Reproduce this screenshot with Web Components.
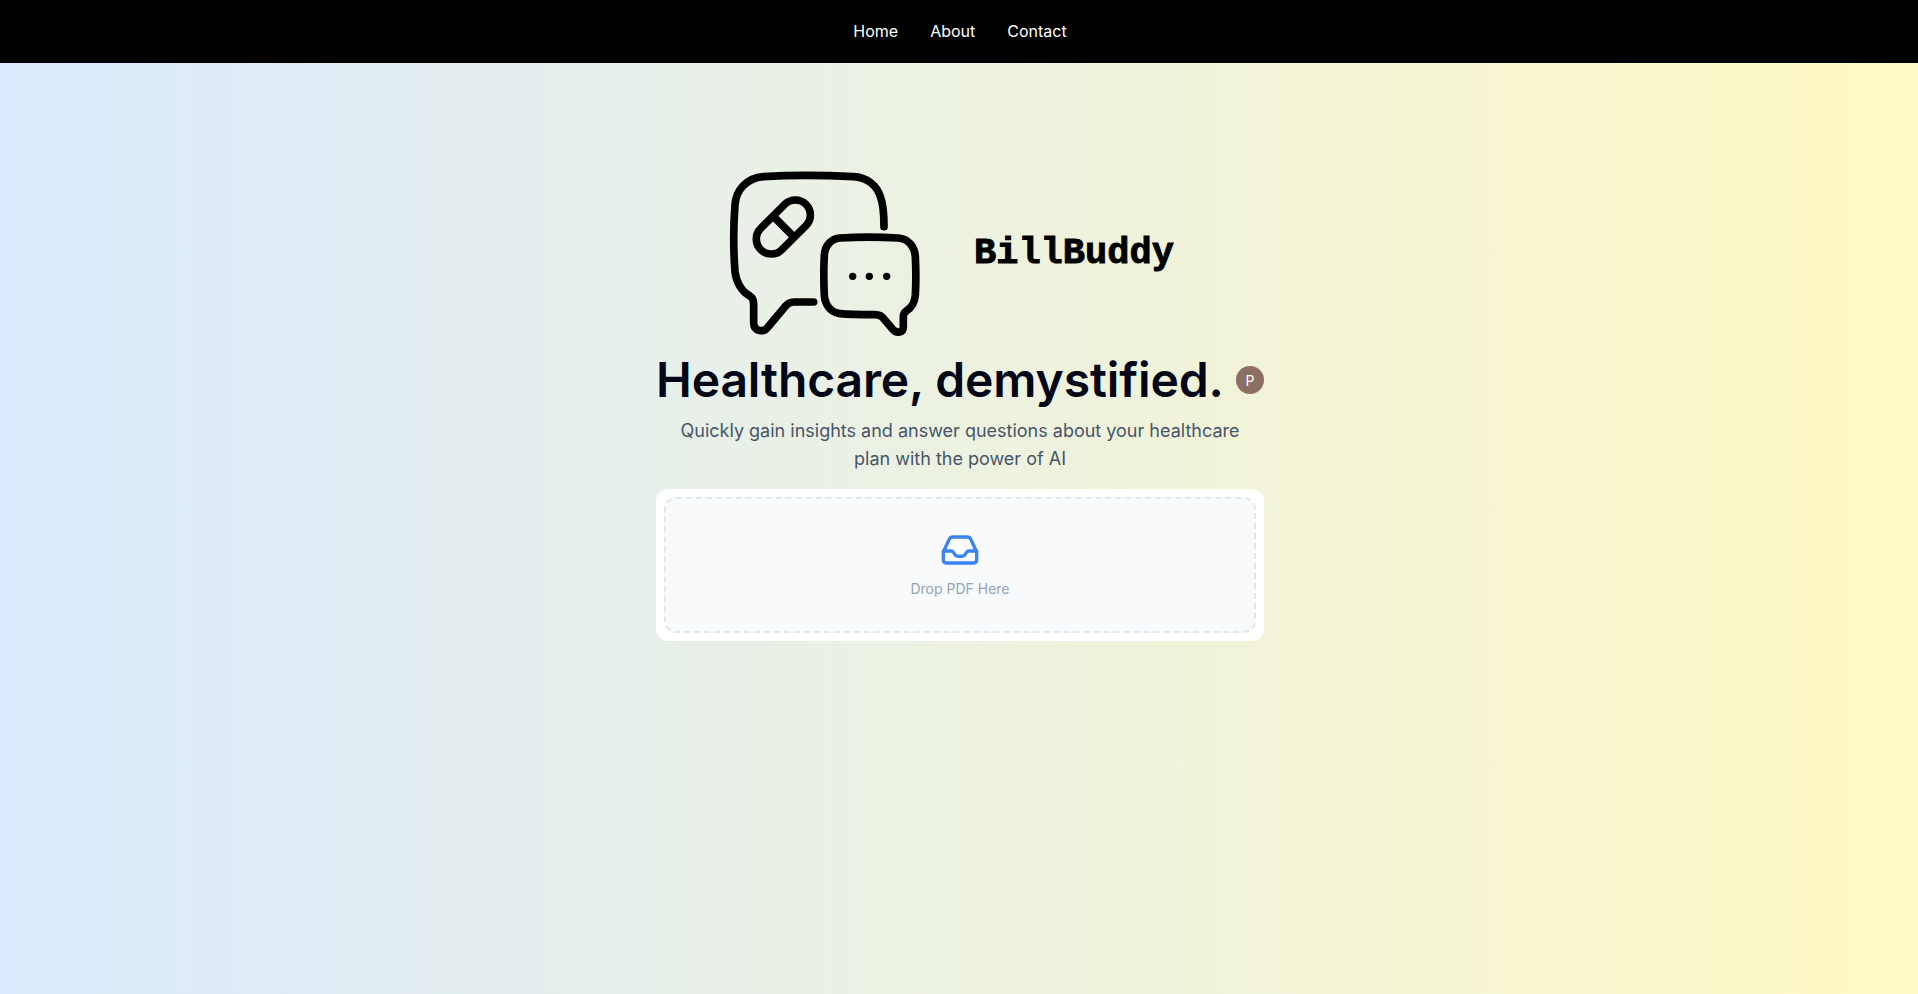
<!DOCTYPE html>
<html>
<head>
<meta charset="utf-8">
<title>BillBuddy</title>
<style>
    html, body { margin: 0; height: 100%; }
    body { font-family: Inter, "Liberation Sans", sans-serif; }
</style>
</head>
<body>
<bill-app>
    <top-nav>
        <a>Home</a>
        <a>About</a>
        <a>Contact</a>
    </top-nav>
    <brand-logo>BillBuddy</brand-logo>
    <hero-title initial="P">Healthcare, demystified.</hero-title>
    <hero-text>Quickly gain insights and answer questions about your healthcare plan with the power of AI</hero-text>
    <drop-zone label="Drop PDF Here"></drop-zone>
</bill-app>
<script>
class billApp extends HTMLElement {
    constructor() {
        super();
        this.attachShadow({mode:"open"});
        this.shadowRoot.innerHTML = `
            <style>
                :host {
                    display: block;
                    min-height: 100vh;
                    background: linear-gradient(to right, #dbeafe, #fef9c3);
                }
                main {
                    box-sizing: content-box;
                    width: 608px;
                    margin: 0 auto;
                    padding: 102px 0 0 2px;
                    display: flex;
                    flex-direction: column;
                }
            </style>
            <slot name="nav"></slot>
            <main><slot></slot></main>
        `;
    }
    connectedCallback() {
        const nav = this.querySelector("top-nav");
        if (nav) nav.slot = "nav";
    }
}
class topNav extends HTMLElement {
    constructor() {
        super();
        this.attachShadow({mode:"open"});
        this.shadowRoot.innerHTML = `
            <style>
                :host {
                    display: flex;
                    justify-content: center;
                    align-items: center;
                    gap: 32px;
                    height: 63px;
                    padding: 0 0 2px 2px;
                    box-sizing: border-box;
                    background: #000;
                    color: #fff;
                    font-size: 16px;
                }
            </style>
            <slot></slot>
        `;
    }
}
class brandLogo extends HTMLElement {
    constructor() {
        super();
        this.attachShadow({mode:"open"});
        this.shadowRoot.innerHTML = `
            <style>
                :host {
                    display: flex;
                    align-items: center;
                    gap: 44px;
                    padding-left: 64px;
                    color: #000;
                }
                svg { width: 210px; height: 175px; flex: none; }
                span {
                    font: bold 37px "Liberation Mono", "DejaVu Sans Mono", monospace;
                    -webkit-text-stroke: 0.9px #000;
                }
            </style>
            <svg viewBox="60 45 630 525" fill="none" stroke="#000" stroke-width="23" stroke-linecap="round" stroke-linejoin="round">
                <path d="M552 230 C552 190 551 165 541 140 C530 105 500 82 460 80 C360 75 270 75 190 80 C140 84 108 120 105 165 C100 230 100 300 105 365 C108 395 125 425 150 438 C160 444 161 452 161 462 L161 518 C161 543 190 550 204 531 L255 470 C262 461 268 456 282 456 L341 456"/>
                <path d="M420 264 C470 261 540 261 595 264 C625 266 644 290 646 320 C648 360 648 400 646 435 C644 460 632 475 620 482 C612 487 610 492 610 500 L610 530 C610 548 590 552 578 538 L552 507 C546 498 540 494 525 494 C490 494 450 494 420 491 C392 488 375 465 373 435 C371 395 371 350 373 315 C375 285 395 266 420 264 Z"/>
                <rect x="154" y="186" width="192" height="90" rx="45" transform="rotate(-45 250 231)"/>
                <path d="M220 199 L284 263" stroke-linecap="butt"/>
                <g fill="#000" stroke="none">
                    <circle cx="458" cy="379" r="11"/>
                    <circle cx="508" cy="379" r="11"/>
                    <circle cx="560" cy="379" r="11"/>
                </g>
            </svg>
            <span><slot></slot></span>
        `;
    }
}
class userBadge extends HTMLElement {
    constructor() {
        super();
        this.attachShadow({mode:"open"});
        this.shadowRoot.innerHTML = `
            <style>
                :host {
                    display: flex;
                    justify-content: center;
                    align-items: center;
                    width: 28px;
                    height: 28px;
                    border-radius: 50%;
                    background: #8d6e63;
                    color: #fff;
                    font-size: 14px;
                    flex: none;
                }
            </style>
            <slot></slot>
        `;
    }
}
class heroTitle extends HTMLElement {
    constructor() {
        super();
        this.attachShadow({mode:"open"});
    }
    connectedCallback() {
        this.shadowRoot.innerHTML = `
            <style>
                :host {
                    display: flex;
                    justify-content: space-between;
                    align-items: center;
                    height: 60px;
                    margin-top: 10px;
                }
                h1 {
                    margin: 0;
                    font-size: 48px;
                    line-height: 60px;
                    font-weight: 600;
                    letter-spacing: -0.125px;
                    color: #020617;
                }
            </style>
            <h1><slot></slot></h1>
            <user-badge>${this.getAttribute("initial")}</user-badge>
        `;
    }
}
class heroText extends HTMLElement {
    constructor() {
        super();
        this.attachShadow({mode:"open"});
        this.shadowRoot.innerHTML = `
            <style>
                :host {
                    display: block;
                    margin-top: 7px;
                    padding: 0 20px;
                    text-align: center;
                    font-size: 18px;
                    line-height: 28px;
                    color: #475569;
                }
            </style>
            <slot></slot>
        `;
    }
}
class dropZone extends HTMLElement {
    constructor() {
        super();
        this.attachShadow({mode:"open"});
    }
    connectedCallback() {
        this.shadowRoot.innerHTML = `
            <style>
                :host {
                    display: block;
                    margin-top: 16px;
                    padding: 8px;
                    background: #fff;
                    border-radius: 12px;
                }
                .area {
                    box-sizing: border-box;
                    height: 136px;
                    padding-top: 4px;
                    display: flex;
                    flex-direction: column;
                    justify-content: center;
                    align-items: center;
                    gap: 14px;
                    background: #f8fafc;
                    border: 2px dashed #e2e8f0;
                    border-radius: 12px;
                    color: #94a3b8;
                    font-size: 14px;
                    line-height: 20px;
                }
                svg { width: 40px; height: 30px; display: block; }
            </style>
            <div class="area">
                <svg viewBox="60 44 120 90" fill="none" stroke="#3b82f6" stroke-width="10" stroke-linejoin="round" stroke-linecap="round">
                    <path d="M70 95 L88 56 Q91 50 98 50 H142 Q149 50 152 56 L170 95 V118 Q170 128 160 128 H80 Q70 128 70 118 Z"/>
                    <path d="M70 92 H92 Q98 92 101 97 L105 103 Q109 108 120 108 Q131 108 135 103 L139 97 Q142 92 148 92 H170"/>
                </svg>
                <span>${this.getAttribute("label")}</span>
            </div>
        `;
    }
}
customElements.define("user-badge", userBadge);
customElements.define("top-nav", topNav);
customElements.define("brand-logo", brandLogo);
customElements.define("hero-title", heroTitle);
customElements.define("hero-text", heroText);
customElements.define("drop-zone", dropZone);
customElements.define("bill-app", billApp);
</script>
</body>
</html>
